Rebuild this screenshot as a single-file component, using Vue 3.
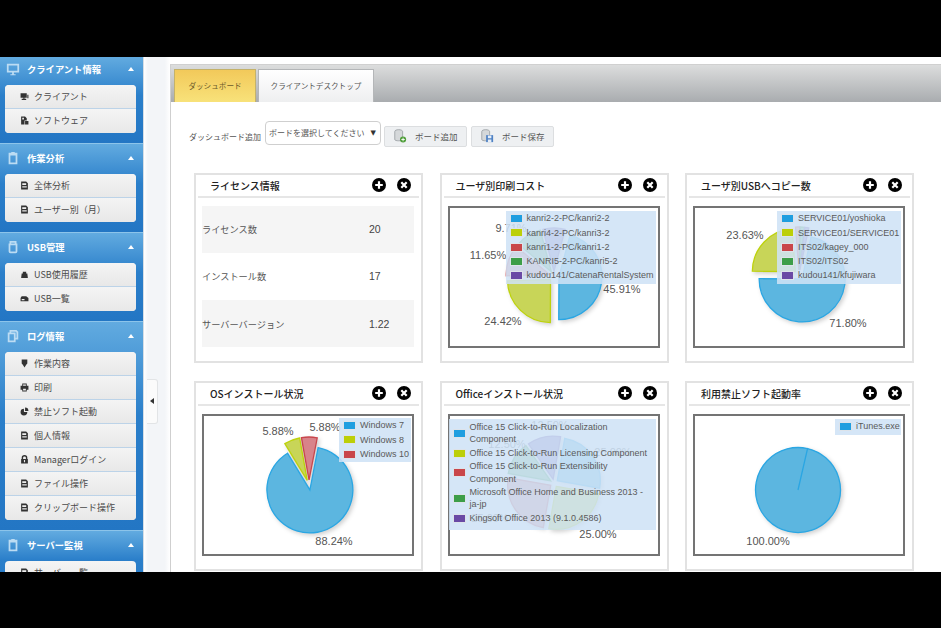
<script setup>
const icons = {
  monitor: 'M1 2h14v10H9v2h2v1H5v-1h2v-2H1zM3 4v6h10V4z',
  clipboard: 'M3 2h3V1h4v1h3v13H3zM5 5v8h6V5z',
  usb: 'M4 1h8v3h1v9a2 2 0 0 1-2 2H5a2 2 0 0 1-2-2V4h1zM6 3v1h4V3zM5 6v7h6V6z',
  docs: 'M2 4h2V1h8l2 2v9h-3v3H2zM6 3v1h5v6h1V4l-1-1zM4 6v7h5V6z',
  desktop: 'M1 2h11v8H8v2h3v2H3v-2h3v-2H1zM13 5h2v6h-2z',
  disk: 'M2 1h7l3 3v4H8v7H2zM9 9h6v6H9zM4 3v3h3V3z',
  doc: 'M2 1h9l3 3v11H2zM4 4v3h7V4zM4 9v1h8V9zM4 11.500v1h8v-1z',
  bag: 'M5 3h6v3h2l1 8H2l1-8h2z',
  drive: 'M3 4h8l4 3v6H1V7zM3 9v2h5V9z',
  pin: 'M3 1h10v7l-2 2-3 5-3-5-2-2z',
  printer: 'M4 1h8v4h3v7h-3v3H4v-3H1V5h3zM5.500 2.500V5h5V2.500zM5.500 10v3.500h5V10z',
  pie: 'M7 3a6 6 0 1 0 6 6H7zM9 1a6 6 0 0 1 6 6H9z',
  lock: 'M3 7V5a5 5 0 0 1 10 0v2h1v8H2V7zM5.500 7h5V5a2.500 2.500 0 0 0-5 0zM7 9v4h2V9z'
}

const groups = [
  { title: 'クライアント情報', icon: 'monitor', items: [
    { label: 'クライアント', icon: 'desktop' },
    { label: 'ソフトウェア', icon: 'disk' }
  ] },
  { title: '作業分析', icon: 'clipboard', items: [
    { label: '全体分析', icon: 'doc' },
    { label: 'ユーザー別（月）', icon: 'doc' }
  ] },
  { title: 'USB管理', icon: 'usb', items: [
    { label: 'USB使用履歴', icon: 'bag' },
    { label: 'USB一覧', icon: 'drive' }
  ] },
  { title: 'ログ情報', icon: 'docs', items: [
    { label: '作業内容', icon: 'pin' },
    { label: '印刷', icon: 'printer' },
    { label: '禁止ソフト起動', icon: 'pie' },
    { label: '個人情報', icon: 'doc' },
    { label: 'Managerログイン', icon: 'lock' },
    { label: 'ファイル操作', icon: 'doc' },
    { label: 'クリップボード操作', icon: 'doc' }
  ] },
  { title: 'サーバー監視', icon: 'clipboard', items: [
    { label: 'サーバー一覧', icon: 'doc' }
  ] }
]

const licenseRows = [
  { label: 'ライセンス数', value: '20' },
  { label: 'インストール数', value: '17' },
  { label: 'サーバーバージョン', value: '1.22' }
]

const palette = {
  blue: { fill: '#5cb6e0', stroke: '#2aa6e3', swatch: '#1f9ee0' },
  yellow: { fill: '#c8d558', stroke: '#bdd20c', swatch: '#bccf08' },
  red: { fill: '#d8838a', stroke: '#c9464c', swatch: '#c9464a' },
  green: { fill: '#72b87a', stroke: '#3d9e48', swatch: '#3d9e48' },
  purple: { fill: '#8f78bd', stroke: '#6a4aa5', swatch: '#6a4aa5' }
}

const charts = [
  {
    title: 'ユーザ別印刷コスト', cx: 106, cy: 70, r: 43, start: 15, explode: 5,
    slices: [[45.91, 'blue'], [24.42, 'yellow'], [11.65, 'red'], [9.71, 'green'], [8.31, 'purple']],
    labels: [[174, 87, '45.91%'], [55, 119, '24.42%'], [40, 53, '11.65%'], [63, 26, '9.71%']],
    legendClass: 'legendPrint',
    legend: [['kanri2-2-PC/kanri2-2', 'blue'], ['kanri4-2-PC/kanri3-2', 'yellow'], ['kanri1-2-PC/kanri1-2', 'red'], ['KANRI5-2-PC/kanri5-2', 'green'], ['kudou141/CatenaRentalSystem', 'purple']]
  },
  {
    title: 'ユーザ別USBへコピー数', cx: 106, cy: 69, r: 43, start: 12, explode: 5,
    slices: [[71.8, 'blue'], [23.63, 'yellow'], [1.6, 'red'], [1.5, 'green'], [1.47, 'purple']],
    labels: [[52, 33, '23.63%'], [155, 121, '71.80%']],
    legendClass: 'legendUsb',
    legend: [['SERVICE01/yoshioka', 'blue'], ['SERVICE01/SERVICE01', 'yellow'], ['ITS02/kagey_000', 'red'], ['ITS02/ITS02', 'green'], ['kudou141/kfujiwara', 'purple']]
  },
  {
    title: 'OSインストール状況', cx: 107, cy: 71, r: 43, start: 11, explode: 5,
    slices: [[88.24, 'blue'], [5.88, 'yellow'], [5.88, 'red']],
    labels: [[76, 21, '5.88%'], [123, 17, '5.88%'], [132, 131, '88.24%']],
    legendClass: 'legendOs',
    legend: [['Windows 7', 'blue'], ['Windows 8', 'yellow'], ['Windows 10', 'red']]
  },
  {
    title: 'Officeインストール状況', cx: 106, cy: 69, r: 43, start: 10, explode: 4,
    slices: [[25, 'blue'], [25, 'yellow'], [25, 'red'], [12.5, 'green'], [12.5, 'purple']],
    labels: [[150, 124, '25.00%'], [165, 42, '25.00%'], [59, 34, '12.50%'], [42, 108, '25.00%'], [102, 15, '12.50%']],
    legendClass: 'legendOffice',
    legend: [['Office 15 Click-to-Run Localization Component', 'blue'], ['Office 15 Click-to-Run Licensing Component', 'yellow'], ['Office 15 Click-to-Run Extensibility Component', 'red'], ['Microsoft Office Home and Business 2013 - ja-jp', 'green'], ['Kingsoft Office 2013 (9.1.0.4586)', 'purple']]
  },
  {
    title: '利用禁止ソフト起動率', cx: 105, cy: 76, r: 42.500, start: 13, explode: 0,
    slices: [[100, 'blue']],
    labels: [[75, 131, '100.00%']],
    legendClass: 'legendItunes',
    legend: [['iTunes.exe', 'blue']]
  }
]

const point = (cx, cy, r, deg) => {
  const rad = (deg - 90) * Math.PI / 180
  return [cx + r * Math.cos(rad), cy + r * Math.sin(rad)]
}

// flot style pie: slices pushed out from the centre along their middle angle
const slicePaths = (chart) => {
  let angle = chart.start
  return chart.slices.map(([pct, color]) => {
    const sweep = Math.min(pct * 3.6, 359.99)
    const mid = angle + sweep / 2
    const [ox, oy] = point(chart.cx, chart.cy, chart.explode, mid)
    const [x1, y1] = point(ox, oy, chart.r, angle)
    const [x2, y2] = point(ox, oy, chart.r, angle + sweep)
    const large = sweep > 180 ? 1 : 0
    angle += sweep
    return {
      d: `M${ox} ${oy}L${x1} ${y1}A${chart.r} ${chart.r} 0 ${large} 1 ${x2} ${y2}Z`,
      fill: palette[color].fill,
      stroke: palette[color].stroke
    }
  })
}
</script>

<template>
  <div class="page">
    <div class="blackBar"></div>
    <div class="screen">
      <aside class="sidebar">
        <section v-for="group in groups" :key="group.title" class="group">
          <div class="groupHead">
            <svg class="groupIcon" viewBox="0 0 16 16"><path :d="icons[group.icon]" fill-rule="evenodd" /></svg>
            <span class="groupTitle">{{ group.title }}</span>
            <span class="caret"></span>
          </div>
          <ul class="groupItems">
            <li v-for="item in group.items" :key="item.label" class="groupItem">
              <svg class="itemIcon" viewBox="0 0 16 16"><path :d="icons[item.icon]" fill-rule="evenodd" /></svg>
              <span>{{ item.label }}</span>
            </li>
          </ul>
        </section>
      </aside>

      <div class="splitter">
        <div class="handle"><span class="handleArrow"></span></div>
      </div>

      <main class="main">
        <div class="tabs">
          <div class="tab tabActive">ダッシュボード</div>
          <div class="tab">クライアントデスクトップ</div>
        </div>

        <div class="toolbar">
          <span class="toolbarLabel">ダッシュボード追加</span>
          <div class="select">
            <span>ボードを選択してください</span>
            <span class="selectArrow">▼</span>
          </div>
          <button class="toolButton">
            <svg class="toolIcon" viewBox="0 0 16 16">
              <path d="M2 3c0-3 9-3 9 0v9c0 2-9 2-9 0z" fill="#d5d8da" stroke="#8d9296" stroke-width="0.800" />
              <circle cx="11.500" cy="12" r="3.500" fill="#4f9e3a" />
              <path d="M11.500 10v4M9.500 12h4" stroke="#fff" stroke-width="1" />
            </svg>
            ボード追加
          </button>
          <button class="toolButton">
            <svg class="toolIcon" viewBox="0 0 16 16">
              <path d="M2 3c0-3 9-3 9 0v9c0 2-9 2-9 0z" fill="#d5d8da" stroke="#8d9296" stroke-width="0.800" />
              <path d="M7 7h8v8H7z" fill="#4f82c4" />
              <path d="M9 7.500h4v3H9zM9 12h4v3H9z" fill="#e6eef8" />
            </svg>
            ボード保存
          </button>
        </div>

        <div class="cards">
          <article class="card">
            <header class="cardHead">
              <h3 class="cardTitle">ライセンス情報</h3>
              <svg class="cardIcon" viewBox="0 0 14 14"><circle cx="7" cy="7" r="7" /><path d="M7 3.200v7.600M3.200 7h7.600" stroke="#fff" stroke-width="2.200" /></svg>
              <svg class="cardIcon" viewBox="0 0 14 14"><circle cx="7" cy="7" r="7" /><path d="M4.300 4.300l5.400 5.400M9.700 4.300l-5.400 5.400" stroke="#fff" stroke-width="2.200" /></svg>
            </header>
            <div class="licenseTable">
              <div v-for="row in licenseRows" :key="row.label" class="licenseRow">
                <span class="licenseLabel">{{ row.label }}</span>
                <span class="licenseValue">{{ row.value }}</span>
              </div>
            </div>
          </article>

          <article v-for="chart in charts" :key="chart.title" class="card">
            <header class="cardHead">
              <h3 class="cardTitle">{{ chart.title }}</h3>
              <svg class="cardIcon" viewBox="0 0 14 14"><circle cx="7" cy="7" r="7" /><path d="M7 3.200v7.600M3.200 7h7.600" stroke="#fff" stroke-width="2.200" /></svg>
              <svg class="cardIcon" viewBox="0 0 14 14"><circle cx="7" cy="7" r="7" /><path d="M4.300 4.300l5.400 5.400M9.700 4.300l-5.400 5.400" stroke="#fff" stroke-width="2.200" /></svg>
            </header>
            <div class="chartBox">
              <svg class="chart" viewBox="0 0 212 142">
                <g class="pie">
                  <path v-for="(slice, i) in slicePaths(chart)" :key="i" :d="slice.d" :fill="slice.fill" :stroke="slice.stroke" stroke-width="1.300" />
                </g>
                <text v-for="label in chart.labels" :key="label[0]" :x="label[0]" :y="label[1]" class="pieLabel">{{ label[2] }}</text>
              </svg>
              <div :class="['legend', chart.legendClass]">
                <div v-for="entry in chart.legend" :key="entry[0]" class="legendRow">
                  <span class="swatch" :style="{ background: palette[entry[1]].swatch }"></span>
                  <span class="legendText">{{ entry[0] }}</span>
                </div>
              </div>
            </div>
          </article>
        </div>
      </main>
    </div>
    <div class="blackBar"></div>
  </div>
</template>

<style>
html, body {
  margin: 0;
  background: #000;
}
</style>

<style scoped>
.page {
  width: 941px;
  height: 628px;
  display: flex;
  flex-direction: column;
  font-family: "Noto Sans CJK JP", "Liberation Sans", sans-serif;
  overflow: hidden;
}

.blackBar {
  flex: 1;
  background: #000;
}

.screen {
  height: 515px;
  display: flex;
  background: #fff;
  overflow: hidden;
}

.sidebar {
  width: 143px;
  flex-shrink: 0;
  border-right: 1px solid #d5dde5;
}

.group {
  padding-bottom: 10px;
  border-top: 1px solid #8cc4ea;
  background: linear-gradient(#62abe0, #2b7fca 45%, #2376c4);
}

.group:first-child {
  border-top: none;
}

.groupHead {
  height: 30px;
  box-sizing: border-box;
  padding: 0 6px 2px;
  display: flex;
  align-items: center;
  color: #fff;
}

.group:first-child .groupHead {
  height: 28px;
  padding-bottom: 4px;
}

.groupIcon {
  width: 14px;
  height: 14px;
  fill: #bcdcf3;
  margin-right: 7px;
}

.groupTitle {
  flex: 1;
  font-size: 9.300px;
  font-weight: 700;
}

.caret {
  width: 0;
  height: 0;
  border-left: 3.500px solid transparent;
  border-right: 3.500px solid transparent;
  border-bottom: 4px solid #fff;
  margin-right: 3px;
}

.groupItems {
  list-style: none;
  margin: 0 7px 0 5px;
  padding: 0;
  background: #eee;
  border-radius: 4px;
  overflow: hidden;
}

.groupItem {
  height: 24px;
  box-sizing: border-box;
  display: flex;
  align-items: center;
  padding-left: 15px;
  gap: 5px;
  font-size: 9px;
  color: #4a4a4a;
  background: linear-gradient(#f4f4f4, #e8e8e8);
  border-bottom: 1px solid #bcd3e8;
}

.groupItem:last-child {
  border-bottom: none;
}

.itemIcon {
  width: 9px;
  height: 9px;
  fill: #333;
}

.splitter {
  width: 26px;
  flex-shrink: 0;
  background: linear-gradient(90deg, #fff 0, #f3f5f8 15%, #f3f5f8 80%, #fff 100%);
  padding-left: 3px;
  box-sizing: border-box;
}

.handle {
  width: 10px;
  height: 43px;
  margin-top: 322px;
  background: #fbfbfb;
  border: 1px solid #e2e4e6;
  border-left: none;
  border-radius: 0 3px 3px 0;
  display: flex;
  align-items: center;
  justify-content: center;
}

.handleArrow {
  width: 0;
  height: 0;
  border-top: 3px solid transparent;
  border-bottom: 3px solid transparent;
  border-right: 4px solid #333;
}

.main {
  flex: 1;
  min-width: 0;
  margin-top: 7px;
  border-top: 1px solid #d0d0d0;
  border-left: 1px solid #cfcfcf;
  background: #fff;
}

.tabs {
  height: 37px;
  box-sizing: border-box;
  padding: 4px 0 0 3px;
  display: flex;
  gap: 2px;
  background: linear-gradient(#dcdddd, #a9acaf);
}

.tab {
  width: 116px;
  box-sizing: border-box;
  text-align: center;
  font-size: 7.600px;
  line-height: 32px;
  color: #555;
  background: linear-gradient(#fff, #eeeff0);
  border: 1px solid #b4b6b8;
  border-bottom: none;
}

.tabActive {
  width: 82px;
  color: #6b5a2a;
  background: linear-gradient(#f2c95a, #f8e27a);
  border-color: #c4b26a;
}

.toolbar {
  display: flex;
  align-items: flex-start;
  padding: 19px 0 0 18px;
  height: 53px;
  box-sizing: border-box;
  color: #555;
  font-size: 8px;
}

.toolbarLabel {
  width: 76px;
  margin-top: 10px;
  white-space: nowrap;
}

.select {
  width: 116px;
  height: 24px;
  box-sizing: border-box;
  display: flex;
  align-items: center;
  justify-content: space-between;
  padding: 0 4px 0 3px;
  background: #fff;
  border: 1px solid #cfcfcf;
  border-radius: 4px;
  white-space: nowrap;
}

.selectArrow {
  font-family: "DejaVu Sans", sans-serif;
  font-size: 7px;
  color: #333;
}

.toolButton {
  width: 83px;
  height: 21px;
  margin: 5px 0 0 3px;
  padding: 0 0 0 8px;
  display: flex;
  align-items: center;
  gap: 8px;
  font-family: inherit;
  font-size: 8.500px;
  color: #555;
  background: #eef0f2;
  border: 1px solid #dcdee0;
  border-radius: 2px;
  white-space: nowrap;
}

.toolButton + .toolButton {
  margin-left: 4px;
}

.toolIcon {
  width: 14px;
  height: 14px;
}

.cards {
  display: grid;
  grid-template-columns: repeat(3, 229px);
  grid-auto-rows: 190px;
  column-gap: 16.500px;
  row-gap: 18px;
  padding: 18px 0 0 23px;
}

.card {
  box-sizing: border-box;
  background: #fff;
  border: 2px solid #e2e2e2;
  padding: 0 2px;
}

.cardHead {
  height: 23px;
  box-sizing: border-box;
  display: flex;
  align-items: center;
  gap: 11px;
  padding: 0 8px 0 12px;
  border-bottom: 2px solid #e6e6e6;
}

.cardTitle {
  flex: 1;
  margin: 0;
  font-size: 10px;
  font-weight: 500;
  color: #222;
  white-space: nowrap;
}

.cardIcon {
  width: 14px;
  height: 14px;
  fill: #000;
}

.licenseTable {
  margin: 8px 5px 0 4px;
}

.licenseRow {
  height: 47.300px;
  display: flex;
  align-items: center;
  font-size: 9.200px;
  color: #555;
}

.licenseRow:nth-child(odd) {
  background: #f5f5f5;
}

.licenseLabel {
  width: 167px;
  white-space: nowrap;
}

.licenseValue {
  font-family: "Liberation Sans", sans-serif;
  font-size: 10.500px;
  color: #444;
}

.chartBox {
  position: relative;
  width: 212px;
  height: 142px;
  margin: 8px 0 0 4px;
  box-shadow: inset 0 0 0 2px #747474;
}

.chart {
  display: block;
  width: 212px;
  height: 142px;
}

.pie {
  filter: drop-shadow(2px 2px 2px rgba(0, 0, 0, 0.18));
}

.pieLabel {
  font-family: "Liberation Sans", sans-serif;
  font-size: 11px;
  fill: #555;
  text-anchor: middle;
}

.legend {
  position: absolute;
  right: 4px;
  top: 5px;
  box-sizing: border-box;
  padding: 1px 2px 1px 3px;
  background: rgba(207, 226, 246, 0.87);
  font-family: "Liberation Sans", sans-serif;
  font-size: 9px;
  line-height: 12.700px;
  color: #5a5a5a;
  white-space: nowrap;
}

.legendPrint {
  width: 150px;
}

.legendUsb {
  width: 124px;
}

.legendOs {
  width: 72px;
  right: 3px;
  top: 4px;
}

.legendOffice {
  width: 207px;
  padding: 2px 7px 5px 3px;
  white-space: normal;
}

.legendItunes {
  width: 66px;
}

.legendRow {
  display: flex;
  align-items: center;
  gap: 4px;
  min-height: 14.300px;
}

.swatch {
  width: 13px;
  height: 9px;
  box-sizing: border-box;
  flex-shrink: 0;
  border: 1px solid #dde3ea;
  margin-left: 1px;
}

.legendText {
  flex: 1;
  min-width: 0;
}
</style>
